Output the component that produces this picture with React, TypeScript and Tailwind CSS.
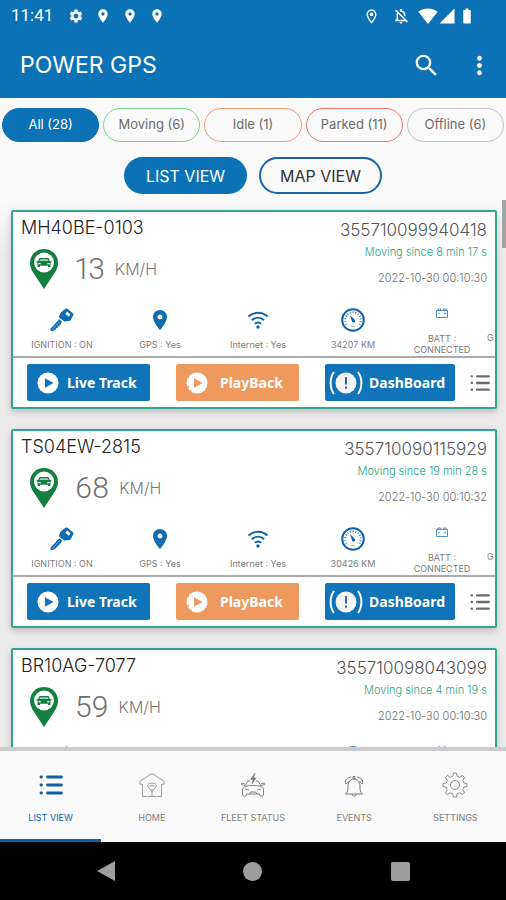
import type { ReactNode } from 'react'
import {
  MdBatteryFull,
  MdLocationOn,
  MdMoreVert,
  MdOutlineLocationOn,
  MdOutlineNotificationsOff,
  MdSearch,
  MdSettings,
  MdSignalCellular4Bar,
  MdSignalWifi4Bar,
} from 'react-icons/md'

type Vehicle = { plate: string; imei: string; since: string; date: string; speed: number; odometer?: string }

const vehicles: Vehicle[] = [
  { plate: 'MH40BE-0103', imei: '355710099940418', since: '8 min 17 s', date: '2022-10-30 00:10:30', speed: 13, odometer: '34207 KM' },
  { plate: 'TS04EW-2815', imei: '355710090115929', since: '19 min 28 s', date: '2022-10-30 00:10:32', speed: 68, odometer: '30426 KM' },
  { plate: 'BR10AG-7077', imei: '355710098043099', since: '4 min 19 s', date: '2022-10-30 00:10:30', speed: 59 },
]

const filters = [
  { label: 'All (28)', style: 'border-[#0a72b5] bg-[#0a72b5] text-white' },
  { label: 'Moving (6)', style: 'border-[#7fd197] text-[#6b6b6b]' },
  { label: 'Idle (1)', style: 'border-[#fb9a78] text-[#6b6b6b]' },
  { label: 'Parked (11)', style: 'border-[#f77272] text-[#6b6b6b]' },
  { label: 'Offline (6)', style: 'border-[#c4c4c4] text-[#6b6b6b]' },
]

function CarPin() {
  return (
    <svg viewBox="0 0 30 42" className="h-[42px] w-[30px]">
      <path d="M15 1C7 1 1 7 1 15c0 3 1 5.500 2.500 8.500L15 41l11.500-17.500C28 20.500 29 18 29 15 29 7 23 1 15 1z" fill="#13803f" />
      <circle cx="15" cy="14.500" r="10" fill="#fff" />
      <path d="M10.500 10h9l1.500 3.200 1.500-.4v1.400l-1 .5V19h-2.500v-1.300h-8V19H8.500v-4.300l-1-.5v-1.400l1.500.4z" fill="#13803f" />
      <path d="M11.300 11.200h7.400l.8 1.900h-9z" fill="#a9d3b9" />
      <path d="M9.500 14.800l2.500.6v.8H9.500zM20.500 14.800l-2.500.6v.8h2.500z" fill="#fff" />
    </svg>
  )
}

function KeyIcon() {
  return (
    <svg viewBox="0 0 24 24" className="size-6" fill="#0f6cb3">
      <path d="M15.500.8c.7-.5 1.400-.5 2 0l5.400 4.400c.6.5.8 1.200.5 1.900l-2.600 5c-.3.500-.8.900-1.400 1l-4.200.5c-.5.1-.9-.1-1.300-.4L9.400 9.800c-.5-.4-.6-.9-.4-1.500l1.700-3.600c.2-.4.500-.7.900-.9z" />
      <path d="M17 3.400l3.400 2.800-1.500 2.600-3.600-2.900z" fill="#fff" />
      <path d="M9.200 11.200l3 2.500-1.300 1.500.2 1.300-1.600.3-.1 1.500-1.600.3-.2 1.400-1.600.3-.2 1.300-1.600.4-1.200 1.300-2.300-.2-.2-2.300z" />
      <path d="M9.400 13.800l-6.900 7.600" stroke="#fff" strokeWidth=".6" strokeDasharray="2 1" />
    </svg>
  )
}

function WifiIcon() {
  return (
    <svg viewBox="0 0 24 24" className="size-6" fill="none" stroke="#0f62ac" strokeWidth="2">
      <path d="M2.500 8.500c5.600-5 13.400-5 19 0" />
      <path d="M5.800 12.300c3.700-3.300 8.700-3.300 12.400 0" />
      <path d="M8.800 15.800c2-1.700 4.400-1.700 6.400 0" />
      <circle cx="12" cy="19" r="1.700" fill="#0f62ac" stroke="none" />
    </svg>
  )
}

function GaugeIcon() {
  return (
    <svg viewBox="0 0 24 24" className="size-6" fill="none" stroke="#1260a8">
      <circle cx="12" cy="12" r="10.800" strokeWidth="2" />
      <path d="M5.600 16.500A7.800 7.800 0 1 1 18.400 16.500" strokeWidth="2" strokeDasharray="1 1.700" opacity=".8" />
      <path d="M9 7l4.500 4.500a1.700 1.700 0 1 1-2.700 1.300z" fill="#1260a8" stroke="none" />
      <path d="M10 18.500h4" strokeWidth="1" opacity=".4" />
    </svg>
  )
}

function BatteryIcon() {
  return (
    <svg viewBox="0 0 24 24" className="size-6" fill="none" stroke="#4a8fca">
      <path d="M6.500 2.500h11v7h-11z" />
      <path d="M8 1h2.500v1.500H8zM13.500 1H16v1.500h-2.500z" />
      <path d="M8 5.500h2M14 5.500h2M15 4.500v2" strokeWidth=".8" />
    </svg>
  )
}

function PlayIcon({ notched = false }: { notched?: boolean }) {
  return (
    <svg viewBox="0 0 22 22" className="size-[22px]">
      <circle cx="11" cy="11" r="10.500" fill="#fff" />
      {notched && <path d="M0 4.500l3 1M-.5 16l3.500-1.500M3.500 20.500l1.500-2" stroke="#ee9a5f" strokeWidth="1.600" />}
      <path d="M8 6.200v9.600l8.500-4.800z" fill={notched ? '#ee9a5f' : '#0f74b8'} />
    </svg>
  )
}

function BrakeIcon() {
  return (
    <svg viewBox="0 0 34 24" className="h-6 w-[34px]" fill="none" stroke="#fff" strokeWidth="2">
      <circle cx="17" cy="12" r="10.500" fill="#f4f4f6" stroke="none" />
      <path d="M5 1C.5 7 .5 17 5 23M29 1c4.500 6 4.500 16 0 22" />
      <path d="M17 6v7.500M17 15.500v2.200" stroke="#3b63a5" />
    </svg>
  )
}

function ListIcon({ className }: { className: string }) {
  return (
    <svg viewBox="0 0 24 24" className={className} fill="none" stroke="currentColor" strokeWidth="2.800" strokeLinecap="round">
      <path d="M8.500 4h14M8.500 12h14M8.500 20h14" />
      <path d="M2 4h.4M2 12h.4M2 20h.4" />
    </svg>
  )
}

function Stat({ icon, width, children }: { icon: ReactNode; width: string; children?: ReactNode }) {
  return (
    <div className={`flex shrink-0 flex-col items-center ${width}`}>
      {icon}
      {children && <p className="flex h-6 items-center text-center text-[9px] leading-[11px] text-[#7d7d7d]">{children}</p>}
    </div>
  )
}

function VehicleCard({ vehicle }: { vehicle: Vehicle }) {
  // readings arrive after the summary, the icons are there from the start
  const loaded = vehicle.odometer !== undefined
  return (
    <article className="shrink-0 rounded-[2px] border-2 border-[#2fa78e] bg-white shadow-[0_3px_6px_rgba(0,0,0,0.2)]">
      <div className="flex h-[94px] justify-between px-2">
        <div>
          <h2 className="pt-1 text-lg leading-6 font-light text-[#222]">{vehicle.plate}</h2>
          <div className="flex h-[58px] items-center pl-2">
            <CarPin />
            <span className="pl-4 font-['Roboto'] text-[30px] leading-8 font-light text-[#6f6f6f] proportional-nums">{vehicle.speed}</span>
            <span className="pl-[10px] text-base font-light text-[#7a7a7a]">KM/H</span>
          </div>
        </div>
        <div className="pt-1 text-right font-light">
          <p className="text-[17px] leading-7 text-[#555]">{vehicle.imei}</p>
          <p className="text-[11px] leading-4 text-[#27a57f]">Moving since {vehicle.since}</p>
          <p className="pt-2 text-[11px] leading-5 text-[#6c6c6c]">{vehicle.date}</p>
        </div>
      </div>
      <div className="flex h-[52px] overflow-hidden border-b-2 border-[#ababab] pt-[2px]">
        <Stat width="w-[98px]" icon={<KeyIcon />}>{loaded && 'IGNITION : ON'}</Stat>
        <Stat width="w-[98px]" icon={<MdLocationOn className="size-6 text-[#0f6cb3]" />}>{loaded && 'GPS : Yes'}</Stat>
        <Stat width="w-[98px]" icon={<WifiIcon />}>{loaded && 'Internet : Yes'}</Stat>
        <Stat width="w-[92px]" icon={<GaugeIcon />}>{vehicle.odometer}</Stat>
        <Stat width="w-[86px]" icon={<BatteryIcon />}>{loaded && <>BATT :<br />CONNECTED</>}</Stat>
        {loaded && <p className="pt-6 pl-[2px] text-[9px] leading-[11px] text-[#7d7d7d]">G</p>}
      </div>
      {loaded && (
        <div className="flex h-[49px] items-center gap-[15px] pr-[5px] pl-[14px]">
          <div className="flex flex-1 justify-between font-['Noto_Sans'] text-sm font-bold text-white">
            <button className="flex h-[37px] w-[123px] items-center gap-2 rounded-[2px] bg-[#0f74b8] pl-[10px]">
              <PlayIcon />
              Live Track
            </button>
            <button className="flex h-[37px] w-[123px] items-center gap-3 rounded-[2px] bg-[#ee9a5f] pl-[10px]">
              <PlayIcon notched />
              PlayBack
            </button>
            <button className="flex h-[37px] w-[130px] items-center gap-[6px] rounded-[2px] bg-[#0f74b8] pl-1">
              <BrakeIcon />
              DashBoard
            </button>
          </div>
          <button aria-label="More actions">
            <ListIcon className="size-5 text-[#6b6b6b]" />
          </button>
        </div>
      )}
    </article>
  )
}

function HomeIcon() {
  return (
    <svg viewBox="0 0 26 26" className="size-[26px]" fill="none" stroke="#9a9a9a">
      <path d="M3.500 24.500V12.500L1 12V9L13 1.500 25 9v3l-2.500.5v12H18M3.500 24.500H8M9 24.500h8" />
      <path d="M8.500 14c0-4 9-4 9 0L13 19.500zM10.500 14.500c1.500-1.500 3.500-1.500 5 0M13 17v8" />
    </svg>
  )
}

function FleetIcon() {
  return (
    <svg viewBox="0 0 26 26" className="size-[26px]" fill="none" stroke="#777" strokeWidth=".9">
      <path d="M4.500 14.500L8 9h2M16 9h2l3.500 5.500M4.500 14.500c5-1.500 12-1.500 17 0l2 2.500v6c0 1.500-4 1.500-4 0v-1h-13v1c0 1.500-4 1.500-4 0v-6z" />
      <path d="M4.500 13.500l-3-1 .5-1.500 3 1M21.500 13.500l3-1-.5-1.500-3 1M5 17l4 1M21 17l-4 1M9 22l1.500-2h5l1.500 2" />
      <path d="M15 1l-4.500 6.500h2.500l-1 4.500 4-6h-2.500z" fill="#777" strokeWidth=".5" />
    </svg>
  )
}

function BellIcon() {
  return (
    <svg viewBox="0 0 26 26" className="size-[26px]" fill="none" stroke="#777">
      <path d="M4.500 22c2.500-2 2.500-4 2.500-8 0-4 2.500-7 6-7s6 3 6 7c0 4 0 6 2.500 8zM11 22c0 3 4 3 4 0M12 7V4.500h2V7" />
      <path d="M7.500 9.500L5 12c-1.500-1-.5-2.500 0-3.500M18.500 9.500L21 12c1.500-1 .5-2.500 0-3.500M10 5C7 5.500 4.500 7 4 10M16 5c3 .5 5.500 2 6 5" strokeWidth=".9" />
    </svg>
  )
}

function GearIcon() {
  return (
    <svg viewBox="0 0 26 26" className="size-[26px]" fill="none" stroke="#8c8c8c" strokeLinejoin="round">
      <path d="M11.500 1h3l.7 3.300 2.500 1 2.900-1.800 2 2-1.800 2.900 1 2.500L25 11.500v3l-3.200.7-1 2.500 1.800 2.900-2 2-2.900-1.800-2.500 1-.7 3.200h-3l-.7-3.200-2.500-1-2.900 1.800-2-2 1.800-2.900-1-2.500L1 14.500v-3l3.200-.6 1-2.500-1.800-2.900 2-2 2.900 1.800 2.500-1z" />
      <circle cx="13" cy="13" r="4.500" />
    </svg>
  )
}

const tabs = [
  { label: 'LIST VIEW', icon: <ListIcon className="size-6" />, active: true },
  { label: 'HOME', icon: <HomeIcon /> },
  { label: 'FLEET STATUS', icon: <FleetIcon /> },
  { label: 'EVENTS', icon: <BellIcon /> },
  { label: 'SETTINGS', icon: <GearIcon /> },
]

export default function App() {
  return (
    <div className="flex h-screen flex-col bg-[#fafafa] font-['Inter',sans-serif]">
      <header className="bg-[#0a72b5] text-white">
        <div className="flex h-8 items-center justify-between pr-[30px] pl-[11px]">
          <div className="flex items-center gap-[11px]">
            <span className="pr-1 font-['Roboto'] text-[17px]">11:41</span>
            <MdSettings className="size-4" />
            <MdLocationOn className="size-4" />
            <MdLocationOn className="size-4" />
            <MdLocationOn className="size-4" />
          </div>
          <div className="flex items-center">
            <MdOutlineLocationOn className="mr-3 size-[17px]" />
            <MdOutlineNotificationsOff className="mr-2 size-[18px]" />
            <MdSignalWifi4Bar className="size-5" />
            <MdSignalCellular4Bar className="mr-[2px] size-[18px]" />
            <MdBatteryFull className="size-[18px]" />
          </div>
        </div>
        <div className="flex h-[66px] items-center justify-between pr-3 pl-5">
          <h1 className="text-[23px]">POWER GPS</h1>
          <div className="flex items-center gap-6">
            <button aria-label="Search"><MdSearch className="size-[29px]" /></button>
            <button aria-label="More options"><MdMoreVert className="size-[29px]" /></button>
          </div>
        </div>
      </header>

      <div className="flex gap-1 px-[2px] pt-[10px]">
        {filters.map(f => (
          <button key={f.label} className={`h-[34px] flex-1 rounded-full border text-[13px] whitespace-nowrap ${f.style}`}>
            {f.label}
          </button>
        ))}
      </div>
      <div className="flex justify-center gap-3 pt-[15px] pb-[6px]">
        <button className="h-[37px] w-[123px] rounded-full bg-[#0a72b5] text-base text-white">LIST VIEW</button>
        <button className="h-[37px] w-[123px] rounded-full border-2 border-[#1b62a8] text-base text-[#333]">MAP VIEW</button>
      </div>

      <main className="relative flex min-h-0 flex-1 flex-col gap-5 overflow-hidden bg-linear-to-b from-[#fafafa] to-[#ebebeb] to-10% pt-[10px] pr-[9px] pl-[11px]">
        {vehicles.map(v => (
          <VehicleCard key={v.plate} vehicle={v} />
        ))}
        <div className="absolute top-0 right-0 h-12 w-1 bg-[#a3a3a3]" />
      </main>

      <nav className="flex h-[95px] border-t-4 border-[#cbcbcb] bg-[#fafafa]">
        {tabs.map(t => (
          <a
            key={t.label}
            href="#"
            className={`flex flex-1 flex-col items-center border-b-3 pt-5 ${t.active ? 'border-[#0f5ea8] text-[#0f5ea8]' : 'border-transparent text-[#7d7d7d]'}`}
          >
            <span className="flex h-7 items-center">{t.icon}</span>
            <span className="pt-[11px] text-[9px] leading-4">{t.label}</span>
          </a>
        ))}
      </nav>

      <div className="flex h-[58px] items-center bg-black px-8">
        <button aria-label="Back" className="flex flex-1 justify-center">
          <svg viewBox="0 0 18 20" className="h-5 w-[18px]"><path d="M0 10L18 0v20z" fill="#9e9e9e" /></svg>
        </button>
        <button aria-label="Home" className="flex flex-1 justify-center">
          <span className="size-[19px] rounded-full bg-[#9e9e9e]" />
        </button>
        <button aria-label="Recent apps" className="flex flex-1 justify-center">
          <span className="size-[19px] rounded-[2px] bg-[#9e9e9e]" />
        </button>
      </div>
    </div>
  )
}
